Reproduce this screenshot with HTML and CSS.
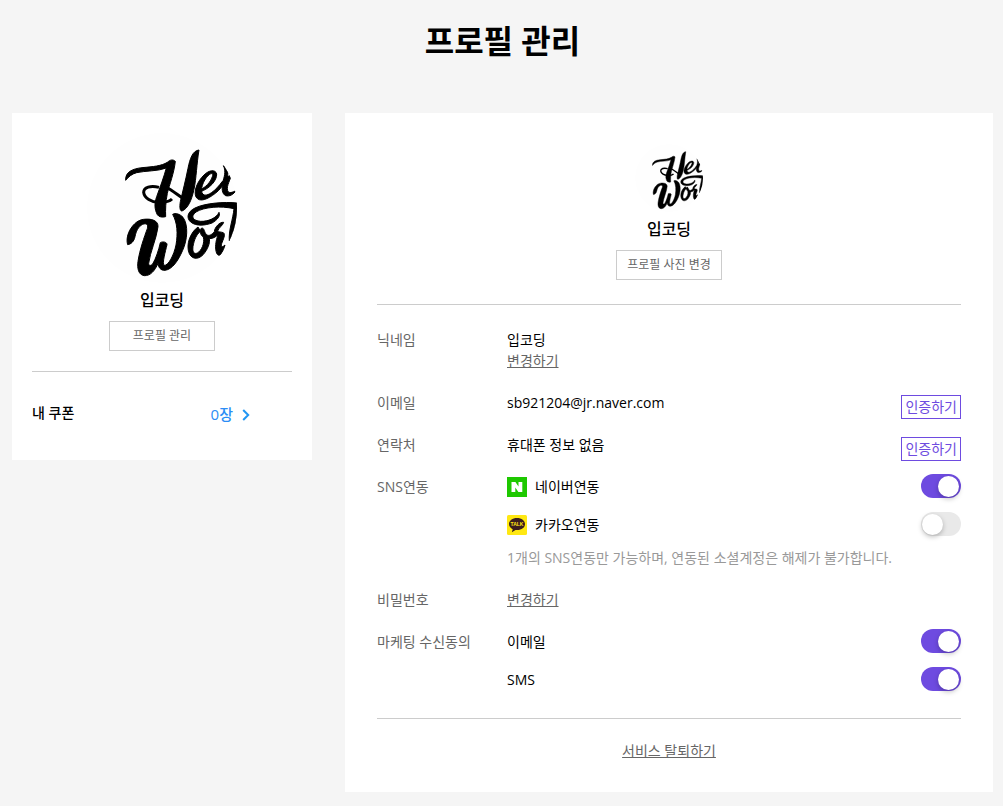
FILE: index.html
```html
<!DOCTYPE html>
<html lang="ko">
<head>
<meta charset="utf-8">
<meta name="viewport" content="width=device-width, initial-scale=1">
<title>프로필 관리</title>
<link rel="stylesheet" href="styles.css">
</head>
<body>
<svg class="defs" aria-hidden="true">
  <symbol id="artwork" viewBox="-9 9 450 450">
    <clipPath id="round"><circle cx="216" cy="234" r="225"/></clipPath>
    <g clip-path="url(#round)">
      <circle cx="216" cy="234" r="225" fill="#fefefe"/>
      <g stroke="#000" stroke-width="3">
      <path d="M107 151C105 126 128 116 156 113C190 110 214 108 232 97C242 88 249 88 256 94C252 130 238 165 232 190C227 215 226 240 227 260C218 263 206 261 202 254C194 238 192 222 200 200C210 172 222 140 229 114C205 124 165 122 140 128C125 132 116 140 107 151Z"/>
      <path d="M327 60C308 62 300 85 294 115C287 150 278 185 271 215C268 233 270 243 276 243C294 236 305 210 312 178C319 145 320 100 327 60Z"/>
      <path fill="none" stroke-width="9" d="M207 172C182 165 161 172 161 187C163 205 185 217 205 217C225 218 240 213 246 207M228 171C245 180 262 194 280 206"/>
      <path d="M331 185C359 176 381 152 380 132C376 117 357 120 342 135C322 154 310 183 318 201C329 219 354 207 376 190C389 180 397 169 402 158L397 154C378 181 351 203 339 193C328 181 340 151 354 137C365 127 371 130 367 140C361 158 346 172 331 179Z"/>
      <path d="M400 107C407 120 405 135 399 153C394 175 396 192 407 197C419 200 430 194 439 181C427 188 416 191 413 182C408 167 423 148 425 130C418 140 411 144 414 129C411 117 405 110 400 107Z"/>
      <path d="M441 219C404 215 345 219 315 234C291 246 289 264 302 276C319 290 347 286 366 279C382 270 392 258 387 247C380 264 354 275 332 274C309 272 300 260 318 246C342 231 393 227 432 236C429 268 415 302 418 333C431 315 438 285 441 259Z"/>
      <path d="M113 344C104 315 130 271 161 268C185 265 205 272 204 290C200 325 180 367 176 400C176 408 182 408 188 402C198 385 206 360 211 338C219 333 232 337 231 344C226 365 216 400 222 406C235 408 252 375 258 345C264 310 262 278 248 253C256 248 270 252 279 262C296 285 292 330 278 361C264 393 247 418 225 421C212 422 205 412 204 400C195 422 181 438 163 437C145 435 141 414 144 394C149 360 163 320 172 296C176 282 168 279 158 283C144 290 138 305 135 320C132 335 122 343 113 344Z"/>
      <path fill-rule="evenodd" d="M324 291C302 306 286 344 298 371C308 392 331 388 345 367C357 350 360 335 358 326C371 326 379 319 384 314C377 334 374 354 380 370C384 378 390 377 394 371C398 365 403 353 405 345C396 353 393 351 395 341C399 329 408 313 400 308C392 305 386 307 383 303C386 293 399 286 401 277C389 275 374 292 373 305C365 315 356 319 350 314C342 307 344 294 335 294C329 299 328 313 340 321C345 339 334 363 322 369C308 375 306 358 311 340C315 322 324 309 332 304Z"/>
      </g>
    </g>
  </symbol>
</svg>

<h1 class="page-title">프로필 관리</h1>

<main class="layout">
  <aside class="card summary">
    <svg class="avatar avatar-large" role="img" aria-label="프로필 사진"><use href="#artwork"/></svg>
    <strong class="name">입코딩</strong>
    <button class="btn" type="button">프로필 관리</button>
    <div class="coupon">
      <span class="coupon-label">내 쿠폰</span>
      <a class="coupon-count" href="#">0장
        <svg class="chevron" viewBox="0 0 8 12" aria-hidden="true"><path d="M1.2 1L6.2 6L1.2 11"/></svg>
      </a>
    </div>
  </aside>

  <section class="card detail">
    <header class="identity">
      <svg class="avatar avatar-small" role="img" aria-label="프로필 사진"><use href="#artwork"/></svg>
      <strong class="name">입코딩</strong>
      <button class="btn" type="button">프로필 사진 변경</button>
    </header>

    <dl class="fields">
      <div class="field">
        <dt>닉네임</dt>
        <dd>입코딩<br><a class="link" href="#">변경하기</a></dd>
      </div>
      <div class="field">
        <dt>이메일</dt>
        <dd class="line">sb921204@jr.naver.com <button class="verify" type="button">인증하기</button></dd>
      </div>
      <div class="field">
        <dt>연락처</dt>
        <dd class="line">휴대폰 정보 없음 <button class="verify" type="button">인증하기</button></dd>
      </div>
      <div class="field">
        <dt>SNS연동</dt>
        <dd>
          <div class="options">
            <div class="option">
              <svg class="brand" viewBox="0 0 20 20" aria-hidden="true"><path fill="#1ec800" d="M0 0H20V20H0Z"/><path fill="#fff" d="M4.5 5H8.4L11.5 9.6V5H15.3V15H11.4L8.3 10.4V15H4.5Z"/></svg>
              <label for="naver">네이버연동</label>
              <input class="toggle" id="naver" type="checkbox" checked>
            </div>
            <div class="option">
              <svg class="brand" viewBox="0 0 20 20" aria-hidden="true"><rect width="20" height="20" rx="1.5" fill="#ffe812"/><path fill="#3b1e1e" d="M10 3C5.4 3 2 5.7 2 9.1C2 11.4 3.5 13.3 5.7 14.3L4.9 17.2L8.5 15C14 15.7 18 12.9 18 9.1C18 5.7 14.6 3 10 3Z"/><text class="talk" x="10" y="11">TALK</text></svg>
              <label for="kakao">카카오연동</label>
              <input class="toggle" id="kakao" type="checkbox">
            </div>
          </div>
          <p class="note">1개의 SNS연동만 가능하며, 연동된 소셜계정은 해제가 불가합니다.</p>
        </dd>
      </div>
      <div class="field">
        <dt>비밀번호</dt>
        <dd><a class="link" href="#">변경하기</a></dd>
      </div>
      <div class="field">
        <dt>마케팅 수신동의</dt>
        <dd class="options">
          <div class="option">
            <label for="mail">이메일</label>
            <input class="toggle" id="mail" type="checkbox" checked>
          </div>
          <div class="option">
            <label for="sms">SMS</label>
            <input class="toggle" id="sms" type="checkbox" checked>
          </div>
        </dd>
      </div>
    </dl>

    <footer class="leave"><a class="link" href="#">서비스 탈퇴하기</a></footer>
  </section>
</main>
</body>
</html>
```
FILE: styles.css
```css
* {
  box-sizing: border-box;
}

body {
  margin: 0;
  padding: 0 10px 14px 12px;
  background: #f5f5f5;
  color: #000;
  font: 14px/21px "Open Sans", "Noto Sans CJK KR", sans-serif;
}

.defs {
  display: block;
  width: 0;
  height: 0;
}

.page-title {
  margin: 0;
  padding: 17px 0 48px;
  font-size: 32px;
  line-height: 48px;
  font-weight: 700;
  text-align: center;
}

.layout {
  display: flex;
  align-items: flex-start;
  gap: 33px;
}

.card {
  background: #fff;
}

.summary {
  display: flex;
  flex: 0 0 300px;
  flex-direction: column;
  align-items: center;
  padding: 20px;
}

.detail {
  flex: 1;
  min-width: 0;
  padding: 31px 32px;
}

.avatar {
  display: block;
}

.avatar-large {
  width: 150px;
  height: 150px;
}

.avatar-small {
  width: 68px;
  height: 68px;
}

.name {
  margin: 5px 0 9px;
  font-size: 16px;
  line-height: 24px;
  font-weight: 500;
}

.btn {
  width: 106px;
  height: 30px;
  padding: 0;
  border: 1px solid #ccc;
  background: #fff;
  color: #666;
  font: inherit;
  font-size: 12px;
  line-height: 18px;
}

.coupon {
  display: flex;
  justify-content: space-between;
  align-self: stretch;
  margin-top: 20px;
  padding: 30px 42px 15px 0;
  border-top: 1px solid #ccc;
}

.coupon-label {
  font-weight: 500;
}

.coupon-count {
  display: flex;
  align-items: center;
  gap: 9px;
  padding-top: 2px;
  color: #2c8df5;
  font-size: 15px;
  font-weight: 500;
  text-decoration: none;
}

.chevron {
  width: 8px;
  height: 12px;
  fill: none;
  stroke: #2196f3;
  stroke-width: 2;
}

.identity {
  display: flex;
  flex-direction: column;
  align-items: center;
  padding-bottom: 24px;
  border-bottom: 1px solid #ccc;
}

.fields {
  display: flex;
  flex-direction: column;
  gap: 21px;
  margin: 0;
  padding: 24px 0 28px;
}

.field {
  display: grid;
  grid-template-columns: 130px 1fr;
}

.field dt {
  color: #666;
}

.field dd {
  margin: 0;
}

.field .line {
  display: flex;
  justify-content: space-between;
  align-items: flex-start;
}

.link {
  color: #666;
  text-decoration: underline;
}

.verify {
  height: 24px;
  margin: 3px 0 -6px;
  padding: 0 3px;
  border: 1px solid #6e4be0;
  background: #fff;
  color: #6e4be0;
  font: inherit;
  line-height: 22px;
}

.options {
  display: flex;
  flex-direction: column;
  gap: 17px;
}

.option {
  display: flex;
  align-items: center;
  height: 21px;
}

.brand {
  width: 20px;
  height: 20px;
  margin-right: 8px;
}

.talk {
  fill: #ffe812;
  font: 700 5px "Liberation Sans", sans-serif;
  text-anchor: middle;
}

.toggle {
  position: relative;
  width: 40px;
  height: 24px;
  margin: 0 0 2px auto;
  border-radius: 12px;
  background: #e9e9e9;
  appearance: none;
}

.toggle::before {
  position: absolute;
  top: 2px;
  left: 1px;
  width: 21px;
  height: 21px;
  border-radius: 50%;
  background: #fff;
  box-shadow: 0 2px 5px rgba(0, 0, 0, 0.25);
  content: "";
}

.toggle:checked {
  background: #6e4be0;
}

.toggle:checked::before {
  left: 17px;
}

.note {
  margin: 12px 0 0;
  color: #999;
}

.leave {
  padding-top: 21px;
  border-top: 1px solid #ccc;
  text-align: center;
}
```
